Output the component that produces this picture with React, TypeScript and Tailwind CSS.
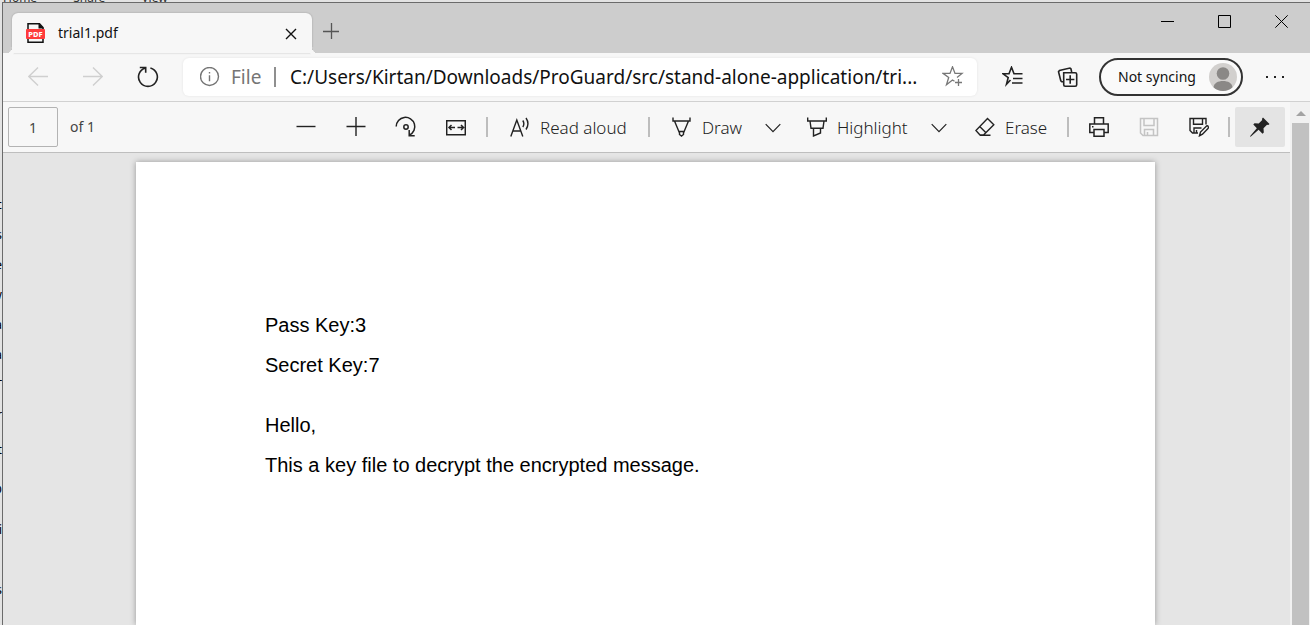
import React from "react";

type IconProps = {
  children: React.ReactNode;
  className?: string;
  size?: number;
};

function Icon({ children, className = "size-5", size = 20 }: IconProps) {
  return (
    <svg
      viewBox={`0 0 ${size} ${size}`}
      className={`shrink-0 ${className}`}
      fill="none"
      stroke="currentColor"
      strokeWidth="1.4"
      aria-hidden="true"
    >
      {children}
    </svg>
  );
}

function Separator({ className = "" }: { className?: string }) {
  return <span className={`h-5 w-0.5 shrink-0 bg-[#bdbdbd] ${className}`} />;
}

function Chevron() {
  return (
    <Icon className="size-4" size={16}>
      <path d="M.7 5.200 8 12.600l7.300-7.400" strokeWidth="1.200" />
    </Icon>
  );
}

function ToolLabel({ children }: { children: React.ReactNode }) {
  return <span className="pt-0.5">{children}</span>;
}

function PdfFileIcon() {
  return (
    <Icon className="size-5">
      <path d="M2 6V.8h11.500L17 4.500V6M2 15.500v3.700h15v-3.700" stroke="#111" strokeWidth="1.500" />
      <path d="M12.500 0 18 5.500h-5.500z" fill="#111" stroke="none" />
      <rect x="0" y="6" width="19" height="10" rx="1" fill="#ff3b3b" stroke="none" />
      <text
        x="9.500"
        y="13.700"
        fill="#fff"
        stroke="none"
        fontFamily="Noto Sans, sans-serif"
        fontSize="7.500"
        fontWeight="800"
        textAnchor="middle"
      >
        PDF
      </text>
    </Icon>
  );
}

function TitleBar() {
  return (
    <header className="flex h-[50px] shrink-0 justify-between bg-[#cdcdcd]">
      <div className="flex items-end pl-[9px]">
        <div className="relative flex h-10 w-[300px] items-center rounded-t-md bg-[#f7f7f7] pr-[11px] pl-3.5 shadow-[0_0_2px_rgba(0,0,0,0.25)]">
          <span className="absolute bottom-0 -left-1.5 size-1.5 rounded-br-md bg-[#cdcdcd] shadow-[3px_3px_0_#f7f7f7]" />
          <span className="absolute -right-1.5 bottom-0 size-1.5 rounded-bl-md bg-[#cdcdcd] shadow-[-3px_3px_0_#f7f7f7]" />
          <PdfFileIcon />
          <span className="ml-3 flex-1 text-sm text-[#111]">trial1.pdf</span>
          <button type="button" aria-label="Close tab" className="flex size-5 items-center justify-center pt-0.5 text-[#111]">
            <Icon className="size-3" size={12}>
              <path d="m1 1 10 10M11 1 1 11" strokeWidth="1.400" />
            </Icon>
          </button>
        </div>
        <button type="button" aria-label="New tab" className="flex h-11 w-[38px] items-center justify-center text-[#555]">
          <Icon className="size-4" size={16}>
            <path d="M0 8.500h16M8.500 0v16" strokeWidth="1.300" />
          </Icon>
        </button>
      </div>
      <div className="flex h-[37px] text-black">
        <button type="button" aria-label="Minimize" className="flex w-[57px] items-center justify-center">
          <Icon className="size-[13px]" size={13}>
            <path d="M0 6.500h13" strokeWidth="1" />
          </Icon>
        </button>
        <button type="button" aria-label="Maximize" className="flex w-[57px] items-center justify-center">
          <Icon className="size-[13px]" size={13}>
            <path d="M.5.5h12v12H.5z" strokeWidth="1" />
          </Icon>
        </button>
        <button type="button" aria-label="Close window" className="flex w-[57px] items-center justify-center">
          <Icon className="size-[13px]" size={13}>
            <path d="m.3.3 12.400 12.400M12.700.3.3 12.700" strokeWidth="1" />
          </Icon>
        </button>
      </div>
    </header>
  );
}

function NavigationBar() {
  return (
    <nav className="flex h-[49px] shrink-0 items-center border-b border-[#d1d1d1] bg-[#f7f7f7] pr-[7px] text-[#222]">
      <button type="button" aria-label="Back" className="ml-[7px] flex h-10 w-[55px] items-center justify-center text-[#cfcfcf]">
        <Icon>
          <path d="M20 9.500H.8M10 .5.8 9.500l9.200 9" />
        </Icon>
      </button>
      <button type="button" aria-label="Forward" className="flex h-10 w-[55px] items-center justify-center text-[#cfcfcf]">
        <Icon>
          <path d="M0 9.500h19.200M10 .5l9.200 9-9.200 9" />
        </Icon>
      </button>
      <button type="button" aria-label="Refresh" className="flex h-10 w-[55px] items-center justify-center">
        <Icon className="size-[22px]" size={22}>
          <path d="M13.400 1.900a9.400 9.400 0 1 1-4.900 0M2.800 1.500h5.900v5.300" strokeWidth="1.600" />
        </Icon>
      </button>
      <div className="ml-2 flex h-[38px] min-w-0 flex-1 items-center rounded-md bg-white pr-[13px] pl-[17px] shadow-[0_0_3px_rgba(0,0,0,0.08)]">
        <Icon className="size-5 text-[#757575]">
          <circle cx="9.500" cy="9.500" r="9" />
          <path d="M9.500 8.300v6M9.500 5v1.600" />
        </Icon>
        <label htmlFor="address" className="ml-[11px] w-[43px] text-[19px] text-[#757575]">
          File
        </label>
        <span className="h-5 w-0.5 bg-[#8f8f8f]" />
        <input
          id="address"
          type="text"
          readOnly
          value="C:/Users/Kirtan/Downloads/ProGuard/src/stand-alone-application/tri..."
          className="ml-3.5 min-w-0 flex-1 bg-transparent text-[19px] text-[#111] outline-none"
        />
        <button type="button" aria-label="Add to favorites" className="text-[#777]">
          <Icon className="size-[22px]" size={22}>
            <path d="M12.500 15.200 10.500 14l-6 4.800 2.200-7.300L1 7.400h7l2.500-6.600L13 7.400h7l-5 4M13 16.500h7M16.500 13v7" strokeWidth="1.300" />
          </Icon>
        </button>
      </div>
      <button type="button" aria-label="Favorites" className="ml-2 flex h-10 w-[56px] items-center justify-center">
        <Icon className="size-[22px]" size={22}>
          <path d="M8.500 14 4.500 18.200l1.700-6.700L1 7.800h6l2.500-6.500L12 7.800h8.500M11 12.500h9.500M10 17h10.500" strokeWidth="1.600" />
        </Icon>
      </button>
      <button type="button" aria-label="Collections" className="flex h-10 w-[54px] items-center justify-center">
        <Icon className="size-[22px]" size={22}>
          <path d="M6.700 6.700h11.500a1.500 1.500 0 0 1 1.500 1.500v10.500a1.500 1.500 0 0 1-1.500 1.500H8.200a1.500 1.500 0 0 1-1.500-1.500zM13.200 9.300v8.400M9 13.500h8.400M14.700 6l-.8-3.200-1-.8L2.500 4.500l-1 1.300 2.300 9 1 1h1.500" strokeWidth="1.600" />
        </Icon>
      </button>
      <button type="button" className="ml-1 flex h-[38px] w-36 items-center justify-between rounded-full border-2 border-[#333] bg-[#fafafa] pr-1 pl-[17px] text-sm text-[#111]">
        <span className="whitespace-nowrap">Not syncing</span>
        <Icon className="size-7" size={28}>
          <circle cx="14" cy="14" r="14" fill="#d2d0ce" stroke="none" />
          <circle cx="14" cy="10.500" r="6.300" fill="#8a8886" stroke="none" />
          <path d="M4.500 24.200C5 20 9 18 14 18s9 2 9.500 6.200A14 14 0 0 1 14 28a14 14 0 0 1-9.500-3.800" fill="#8a8886" stroke="none" />
        </Icon>
      </button>
      <button type="button" aria-label="Settings and more" className="ml-1 flex h-10 w-[56px] items-center justify-center">
        <Icon>
          <path d="M1 9h2v2H1zM9 9h2v2H9zM17 9h2v2h-2z" fill="currentColor" stroke="none" />
        </Icon>
      </button>
    </nav>
  );
}

function PdfToolbar() {
  return (
    <div className="flex h-[51px] shrink-0 items-center justify-between border-b border-[#bebebe] bg-[#f7f7f7] px-[5px] text-[#333]">
      <div className="flex items-center gap-3 text-sm text-[#444]">
        <input
          type="text"
          aria-label="Page number"
          defaultValue="1"
          className="h-10 w-[50px] rounded-xs border border-[#b3b3b3] bg-transparent text-center text-sm outline-none"
        />
        <span>of 1</span>
      </div>
      <div className="flex items-center text-[17px] font-light whitespace-nowrap text-[#222]">
        <button type="button" aria-label="Zoom out" className="flex h-10 w-[50px] items-center justify-center">
          <Icon>
            <path d="M.5 9.500h19" />
          </Icon>
        </button>
        <button type="button" aria-label="Zoom in" className="flex h-10 w-[50px] items-center justify-center">
          <Icon>
            <path d="M.5 9.500h19M10 0v19" />
          </Icon>
        </button>
        <button type="button" aria-label="Rotate" className="flex h-10 w-[50px] items-center justify-center">
          <Icon className="size-[22px]" size={22}>
            <path d="M1.200 10.500A9.300 9.300 0 1 1 14.500 19M14.200 14v5.800h5.500" strokeWidth="1.500" />
            <circle cx="11" cy="11" r="2.200" strokeWidth="1.500" />
          </Icon>
        </button>
        <button type="button" aria-label="Fit to width" className="flex h-10 w-[50px] items-center justify-center">
          <Icon>
            <path d="M.7 3.700h18.600v14H.7zM9 10.500H3M5.500 8 3 10.500 5.500 13M11.500 10.500h6M15 8l2.500 2.500L15 13" strokeWidth="1.500" />
          </Icon>
        </button>
        <Separator className="mr-3 ml-[5px]" />
        <button type="button" className="flex h-10 w-[138px] items-center gap-2.5 pl-2.5">
          <Icon>
            <path d="m.8 19.500 6-16.500 6 16.500M2.900 14h7.800M12.800 3.500c1.300 2 1.300 4.500 0 6.500M16 1c2.300 3.300 2.300 8 0 11.500" />
          </Icon>
          <ToolLabel>Read aloud</ToolLabel>
        </button>
        <Separator className="ml-2.5" />
        <button type="button" className="ml-3 flex h-10 w-[91px] items-center gap-2.5 pl-2.5">
          <Icon>
            <path d="M1 .5V4h17V.5M2.500 4l5 12M16.500 4l-5 12M6.800 14.500h5.400M7.500 15v2.500L9.500 19l2-1.500V15" />
          </Icon>
          <ToolLabel>Draw</ToolLabel>
        </button>
        <button type="button" aria-label="Draw options" className="flex h-10 w-10 items-center justify-center">
          <Chevron />
        </button>
        <button type="button" className="ml-1 flex h-10 w-[126px] items-center gap-2.5 pl-2.5">
          <Icon>
            <path d="M.7.5V4h18.600V.5M3 4l1 7.200h12L17 4M6.500 11.500v7.500l7-3v-4.500" />
          </Icon>
          <ToolLabel>Highlight</ToolLabel>
        </button>
        <button type="button" aria-label="Highlight options" className="flex h-10 w-8 items-center justify-center">
          <Chevron />
        </button>
        <button type="button" className="ml-2.5 flex h-10 w-[92px] items-center gap-2.5 pl-2.5">
          <Icon>
            <path d="m12.500 1.500 6.300 6.300L8.500 18H5L.9 13.500zM4.700 9.500l6.300 6.300M5 18.300h10.500" />
          </Icon>
          <ToolLabel>Erase</ToolLabel>
        </button>
        <Separator className="ml-2.5" />
        <button type="button" aria-label="Print" className="ml-[5px] flex h-10 w-[50px] items-center justify-center">
          <Icon>
            <path d="M5.500 7V.7h9V7M4.500 15.500H.8V7h18.400v8.500h-3.700M5 12.500h10v6.800H5zM3 9.700h1.500" strokeWidth="1.500" />
          </Icon>
        </button>
        <button type="button" aria-label="Save" disabled className="flex h-10 w-[50px] items-center justify-center text-[#c4c4c4]">
          <Icon>
            <path d="M1.500 1.500h17v17H4L1.500 16zM5 1.500v7h10v-7M5.500 18.500v-6h9v6M8.500 15v3.500" strokeWidth="1.500" />
          </Icon>
        </button>
        <button type="button" aria-label="Save as" className="flex h-10 w-[50px] items-center justify-center">
          <Icon>
            <path d="M9 16H3.500L1 13.500V1.500h16v6M4.500 1.500v5.800h9V1.500M5 16v-5h7.500M7.500 13v3M10.500 18.800l1-3.800 6-6q1.200-.5 1.800.6.600 1-.3 1.800l-5.500 5.800z" strokeWidth="1.400" />
          </Icon>
        </button>
        <Separator className="ml-1" />
        <button type="button" aria-label="Unpin toolbar" className="ml-[5px] flex h-10 w-[50px] items-center justify-center rounded-xs bg-[#e4e4e4] text-[#222]">
          <Icon>
            <path d="m13 .5 6.500 6.500-1.200 1-1.300-.2-3.500 3.500.3 4.200-1.300 1.200-3.900-3.900-8 7-.6-.6 6.800-8L3.300 7.500l1.200-1.300 4.200.3L12.200 3 12 1.700z" fill="currentColor" stroke="none" />
          </Icon>
        </button>
      </div>
    </div>
  );
}

function Scrollbar() {
  return (
    <div className="flex w-5 shrink-0 flex-col bg-[#f1f1f1] pr-px pl-0.5">
      <div className="flex h-[21px] items-center justify-center text-[#a3a3a3]">
        <Icon className="size-2.5" size={10}>
          <path d="m0 8 5-5 5 5z" fill="currentColor" stroke="none" />
        </Icon>
      </div>
      <div className="flex-1 bg-[#c1c1c1]" />
    </div>
  );
}

function DocumentView() {
  return (
    <main className="flex min-h-0 flex-1 flex-col items-center overflow-hidden bg-[#e5e5e5] pt-[9px] pr-[18px] pl-4">
      <article className="w-full max-w-[1019px] flex-1 bg-white px-[129px] pt-[143px] font-['Liberation_Sans',Arial,sans-serif] text-xl leading-10 text-black shadow-[0_0_6px_rgba(0,0,0,0.35)]">
        <p>Pass Key:3</p>
        <p>Secret Key:7</p>
        <p className="mt-5">Hello,</p>
        <p>This a key file to decrypt the encrypted message.</p>
      </article>
    </main>
  );
}

const upperLetters = ["c", "s", "e", "w", "a", "a", "T", "r"];
const lowerLetters = ["t", "D", "i"];

export default function App() {
  return (
    <div className="flex h-screen flex-col overflow-hidden bg-[#e3e3e3] font-['Noto_Sans','Segoe_UI',sans-serif]">
      <div className="flex h-0.5 shrink-0 items-end gap-9 overflow-hidden pl-[3px] text-xs leading-2 text-[#333]">
        <span>Home</span>
        <span>Share</span>
        <span>View</span>
      </div>
      <div className="flex min-h-0 flex-1">
        <div className="flex w-0.5 shrink-0 flex-col items-end overflow-hidden pt-[187px] text-[13px] text-black">
          {upperLetters.map((letter, index) => (
            <span key={index} className="shrink-0 leading-[30px]">
              {letter}
            </span>
          ))}
          {lowerLetters.map((letter) => (
            <span key={letter} className="shrink-0 leading-10">
              {letter}
            </span>
          ))}
          <span className="mt-5 shrink-0 leading-10">s</span>
        </div>
        <div className="flex min-w-0 flex-1 flex-col border-t border-l border-[#6b6b6b]">
          <TitleBar />
          <NavigationBar />
          <div className="flex min-h-0 flex-1">
            <div className="flex min-w-0 flex-1 flex-col">
              <PdfToolbar />
              <DocumentView />
            </div>
            <Scrollbar />
          </div>
        </div>
      </div>
    </div>
  );
}
